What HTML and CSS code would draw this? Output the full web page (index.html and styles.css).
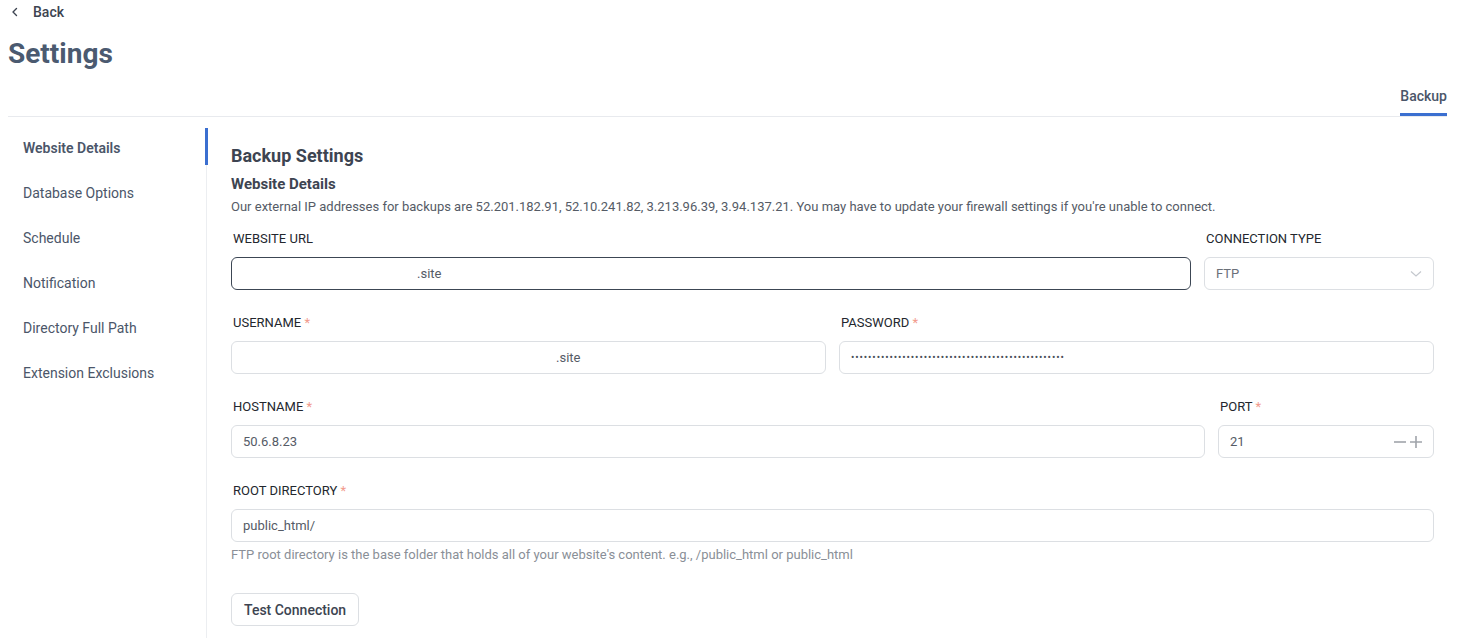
FILE: index.html
```html
<!DOCTYPE html>
<html lang="en">
<head>
  <meta charset="UTF-8">
  <meta name="viewport" content="width=device-width, initial-scale=1.0">
  <title>Settings</title>
  <link rel="stylesheet" href="styles.css">
</head>
<body>
  <div class="page">
    <a class="back" href="#">
      <svg width="8" height="10" viewBox="0 0 8 10"><path d="M5.5 1.5 2 5l3.5 3.5" fill="none" stroke="#3d4451" stroke-width="1.4" stroke-linecap="round" stroke-linejoin="round"/></svg>
      <span>Back</span>
    </a>
    <h1>Settings</h1>

    <div class="tabs">
      <span class="tab active">Backup</span>
    </div>

    <div class="main">
      <ul class="sidebar">
        <li class="active">Website Details</li>
        <li>Database Options</li>
        <li>Schedule</li>
        <li>Notification</li>
        <li>Directory Full Path</li>
        <li>Extension Exclusions</li>
      </ul>

      <div class="content">
        <h2>Backup Settings</h2>
        <h3>Website Details</h3>
        <p class="desc">Our external IP addresses for backups are 52.201.182.91, 52.10.241.82, 3.213.96.39, 3.94.137.21. You may have to update your firewall settings if you're unable to connect.</p>

        <div class="row row-url">
          <div class="field">
            <label>WEBSITE URL</label>
            <input class="focused url" type="text" value=".site">
          </div>
          <div class="field">
            <label>CONNECTION TYPE</label>
            <div class="select">
              <span>FTP</span>
              <svg class="chev" width="12" height="8" viewBox="0 0 12 8"><path d="M1 1.5 6 6l5-4.5" fill="none" stroke="#c4c8ce" stroke-width="1.2"/></svg>
            </div>
          </div>
        </div>

        <div class="row row-half">
          <div class="field">
            <label>USERNAME <i>*</i></label>
            <input class="user" type="text" value=".site">
          </div>
          <div class="field">
            <label>PASSWORD <i>*</i></label>
            <div class="input pass">••••••••••••••••••••••••••••••••••••••••••••••••••</div>
          </div>
        </div>

        <div class="row row-host">
          <div class="field">
            <label>HOSTNAME <i>*</i></label>
            <input type="text" value="50.6.8.23">
          </div>
          <div class="field">
            <label>PORT <i>*</i></label>
            <div class="input port">
              <span>21</span>
              <span class="steps">
                <svg width="12" height="12" viewBox="0 0 12 12"><path d="M0 6h12" stroke="#a0a4aa" stroke-width="1.6"/></svg>
                <svg width="12" height="12" viewBox="0 0 12 12"><path d="M0 6h12M6 0v12" stroke="#a0a4aa" stroke-width="1.6"/></svg>
              </span>
            </div>
          </div>
        </div>

        <div class="row">
          <div class="field">
            <label>ROOT DIRECTORY <i>*</i></label>
            <input type="text" value="public_html/">
            <p class="help">FTP root directory is the base folder that holds all of your website's content. e.g., /public_html or public_html</p>
          </div>
        </div>

        <button class="btn">Test Connection</button>
      </div>
    </div>
  </div>
</body>
</html>
```

FILE: styles.css
```css
body {
  margin: 0;
  font-family: Roboto, "Liberation Sans", sans-serif;
  color: #3d4451;
  background: #fff;
}
.page {
  padding: 0 10px 0 8px;
}
.back {
  display: flex;
  align-items: center;
  gap: 14px;
  height: 22px;
  padding: 1px 0 0 3px;
  font-size: 14px;
  font-weight: 500;
  color: #3d4451;
  text-decoration: none;
}
h1 {
  margin: 9px 0 0;
  font-size: 28px;
  line-height: 44px;
  font-weight: 700;
  color: #4b5a70;
}
.tabs {
  display: flex;
  justify-content: flex-end;
  border-bottom: 1px solid #e8eaee;
  height: 41px;
  box-sizing: border-box;
}
.tab {
  font-size: 14px;
  font-weight: 500;
  color: #4b5669;
  padding-top: 12px;
  height: 40px;
  box-sizing: border-box;
}
.tab.active {
  border-bottom: 3px solid #3b6fd0;
  margin-bottom: -2px;
}
.main {
  display: flex;
  margin-top: 11px;
}
.sidebar {
  list-style: none;
  margin: 0;
  padding: 0 0 20px;
  width: 199px;
  box-sizing: border-box;
  flex-shrink: 0;
  border-right: 1px solid #eceef1;
  min-height: 520px;
}
.sidebar li {
  height: 37px;
  box-sizing: border-box;
  padding: 3px 0 0 15px;
  line-height: 34px;
  margin-bottom: 8px;
  font-size: 14px;
  color: #4b5669;
  position: relative;
}
.sidebar li.active {
  font-weight: 600;
}
.sidebar li.active::after {
  content: "";
  position: absolute;
  right: -2px;
  top: 0;
  bottom: 0;
  width: 3px;
  background: #3b6fd0;
}
.content {
  flex: 1;
  padding: 16px 13px 0 24px;
}
h2 {
  margin: 0;
  font-size: 18px;
  line-height: 24px;
  font-weight: 700;
  color: #3d4451;
}
h3 {
  margin: 6px 0 0;
  font-size: 15px;
  line-height: 20px;
  font-weight: 700;
  color: #3d4451;
}
.desc {
  margin: 4px 0 14px;
  font-size: 13px;
  line-height: 18px;
  color: #555b66;
}
.row {
  display: grid;
  gap: 13px;
  margin-bottom: 24px;
}
.row-url { grid-template-columns: 1fr 230px; }
.row-half { grid-template-columns: 1fr 1fr; }
.row-host { grid-template-columns: 1fr 216px; }
.field label {
  display: block;
  padding-left: 2px;
  margin-bottom: 9px;
  font-size: 13px;
  line-height: 18px;
  color: #23272e;
}
.field label i {
  font-style: normal;
  color: #f29a8c;
}
input, .input, .select {
  display: flex;
  align-items: center;
  width: 100%;
  height: 33px;
  box-sizing: border-box;
  padding: 0 11px;
  border: 1px solid #dcdfe3;
  border-radius: 6px;
  font-family: inherit;
  font-size: 13px;
  color: #555b66;
  background: #fff;
  outline: none;
}
input.focused {
  border-color: #3c4654;
}
input.url { text-indent: 174px; }
input.user { text-indent: 313px; }
.select {
  position: relative;
  justify-content: space-between;
  color: #6b7079;
}
.pass {
  font-size: 10px;
  letter-spacing: 0.9px;
  color: #4a505a;
}
.port {
  justify-content: space-between;
}
.steps {
  display: flex;
  gap: 4px;
}
.help {
  margin: 4px 0 0;
  font-size: 13px;
  line-height: 18px;
  color: #8a8f97;
}
.btn {
  margin-top: 5px;
  height: 33px;
  padding: 0 12px;
  border: 1px solid #dcdfe3;
  border-radius: 6px;
  background: #fff;
  font-family: inherit;
  font-size: 14px;
  font-weight: 500;
  color: #3d4451;
}
```
